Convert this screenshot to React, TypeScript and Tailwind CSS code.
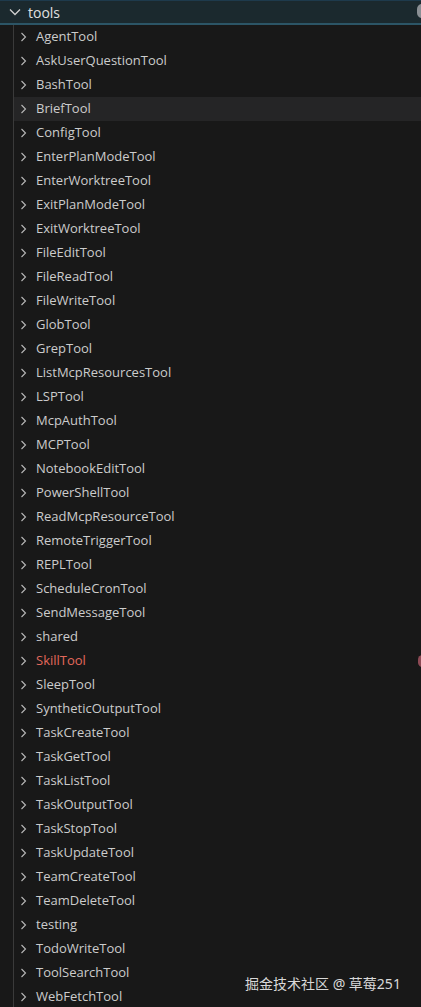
import React from "react";

const items = [
  "AgentTool","AskUserQuestionTool","BashTool","BriefTool","ConfigTool","EnterPlanModeTool","EnterWorktreeTool","ExitPlanModeTool","ExitWorktreeTool","FileEditTool","FileReadTool","FileWriteTool","GlobTool","GrepTool","ListMcpResourcesTool","LSPTool","McpAuthTool","MCPTool","NotebookEditTool","PowerShellTool","ReadMcpResourceTool","RemoteTriggerTool","REPLTool","ScheduleCronTool","SendMessageTool","shared","SkillTool","SleepTool","SyntheticOutputTool","TaskCreateTool","TaskGetTool","TaskListTool","TaskOutputTool","TaskStopTool","TaskUpdateTool","TeamCreateTool","TeamDeleteTool","testing","TodoWriteTool","ToolSearchTool","WebFetchTool",
];

function ChevronRight() {
  return (
    <svg width="8" height="10" viewBox="0 0 8 10" className="shrink-0">
      <path d="M1.5 1 L5.5 5 L1.5 9" fill="none" stroke="#b8b8b8" strokeWidth="1.1" />
    </svg>
  );
}

function ChevronDown() {
  return (
    <svg width="12" height="8" viewBox="0 0 12 8" className="shrink-0">
      <path d="M1 1.5 L6 6.5 L11 1.5" fill="none" stroke="#d0d0d0" strokeWidth="1.3" />
    </svg>
  );
}

export default function App() {
  return (
    <div
      className="relative w-[421px] h-[1007px] overflow-hidden bg-[#181818] text-[13px] text-[#cccccc]"
      style={{ fontFamily: '"Open Sans", "Noto Sans", sans-serif' }}
    >
      <div className="h-[25px] flex items-center bg-[#1b292e] border-t border-[#1e3a4c] border-b-2 border-b-[#2c5566] pl-[9px]">
        <ChevronDown />
        <span className="ml-[7px] text-[14px] text-[#e0e0e0]">tools</span>
        <div className="absolute right-[-6px] top-[4px] w-[10px] h-[14px] rounded-full bg-[#8a8f94]" />
      </div>
      <div className="ml-[13px] border-l border-[#3a3a3a]">
        {items.map((name) => {
          const selected = name === "BriefTool";
          const red = name === "SkillTool";
          return (
            <div
              key={name}
              className={`relative h-[24px] flex items-center pl-[6px] ${selected ? "bg-[#252526]" : ""}`}
            >
              <ChevronRight />
              <span className={`ml-[8px] ${red ? "text-[#e2685b]" : "text-[#cccccc]"}`}>{name}</span>
              {red && (
                <div className="absolute right-[-6px] top-[6px] w-[9px] h-[12px] rounded-full bg-[#8e4a55]" />
              )}
            </div>
          );
        })}
      </div>
      <div
        className="absolute left-[245px] top-[973px] whitespace-nowrap text-[14px] text-[#d8d8d8]"
        style={{ fontFamily: '"Noto Sans", "Noto Sans CJK SC", sans-serif' }}
      >
        掘金技术社区 @ 草莓251
      </div>
    </div>
  );
}
